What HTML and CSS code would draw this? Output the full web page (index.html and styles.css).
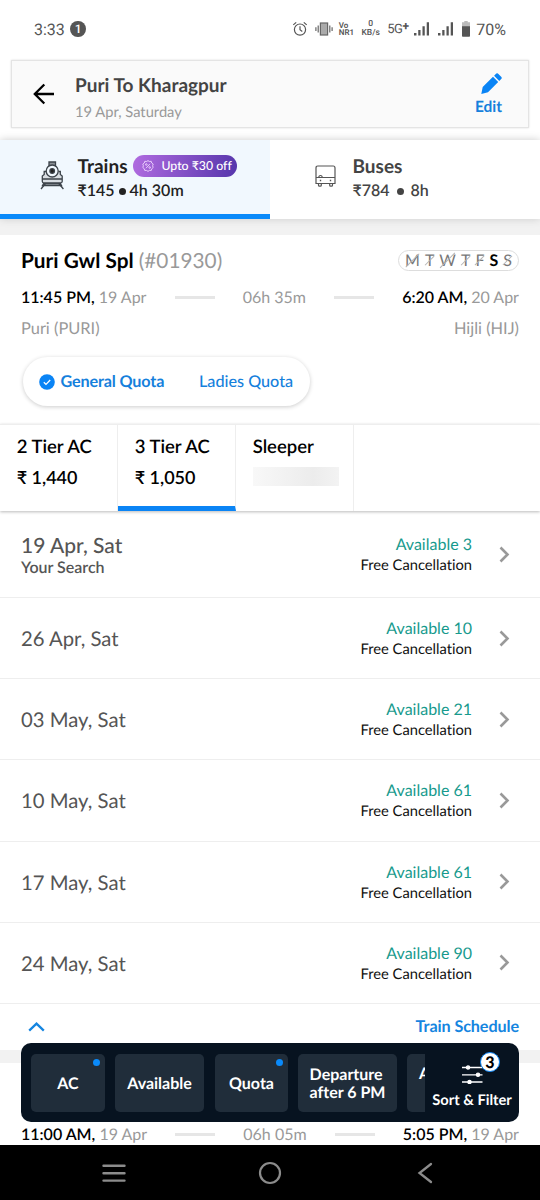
FILE: index.html
```html
<!DOCTYPE html>
<html lang="en">
<head>
<meta charset="utf-8">
<title>Puri To Kharagpur</title>
<link rel="stylesheet" href="styles.css">
</head>
<body>
<div class="phone">
  <div class="status">
    <span class="clock">3:33</span>
    <span class="notice">1</span>
    <svg class="alarm" width="16" height="16" viewBox="0 0 16 16" fill="none" stroke="#555" stroke-width="1.2"><circle cx="8" cy="8.6" r="5.6"/><path d="M8 5.3v3.5l2.3 1.6M1.3 3.9 4.2 1.4M14.7 3.9 11.8 1.4"/></svg>
    <svg class="vibrate" width="18" height="14" viewBox="0 0 18 14" fill="none" stroke="#666" stroke-width="1.2"><rect x="5.4" y="1" width="7.2" height="12" fill="#aaa"/><path d="M3.2 3.5v7M.9 5.3v3.6M14.8 3.5v7M17.1 5.3v3.6"/></svg>
    <span class="stack vonr"><b>Vo</b><b>NR1</b></span>
    <span class="stack speed"><b>0</b><b>KB/s</b></span>
    <span class="net">5G<sup>+</sup></span>
    <svg class="signal-a" width="15" height="14" viewBox="0 0 15.200 14" fill="#555"><path d="M0 11h2.5v2.5H0zM4.3 8h2.3v5.5H4.3zM8.6 4.2h2.3v9.3H8.6zM12.9.2h2.3v13.3h-2.3z"/></svg>
    <svg class="signal-b" width="15" height="14" viewBox="0 0 15.200 14" fill="#555"><path d="M0 11h2.5v2.5H0zM4.3 8h2.3v5.5H4.3zM8.6 4.2h2.3v9.3H8.6zM12.9.2h2.3v13.3h-2.3z"/></svg>
    <svg class="battery" width="8" height="16" viewBox="0 0 8 16"><path fill="#bbb" d="M2.3 0h3.4v1.3H8V6H0V1.300h2.300z"/><path fill="#555" d="M0 5.300h8V15a.8.8 0 0 1-.8.8H.8A.8.8 0 0 1 0 15z"/></svg>
    <span class="percent">70%</span>
  </div>

  <header class="route">
    <svg class="back" width="22" height="22" viewBox="0 0 22 22" fill="none" stroke="#000" stroke-width="2.3"><path d="M21 11H2M11.300 1.500 1.800 11l9.500 9.500"/></svg>
    <div class="route-text">
      <h1>Puri To Kharagpur</h1>
      <p>19 Apr, Saturday</p>
    </div>
    <div class="edit">
      <svg width="21" height="21" viewBox="0 0 21 21" fill="#0a84f5"><path d="M1.700 14 12 3.800l5.200 5.200L7 19.200.3 20.900zM13.100 2.700 15.300.6q.8-.7 1.600 0l3.500 3.500q.7.800 0 1.600l-2.100 2.200z"/></svg>
      <span>Edit</span>
    </div>
  </header>

  <nav class="modes">
    <div class="mode active">
      <svg class="train" width="24" height="29" viewBox="0 0 24 29" fill="none" stroke="#3c434a" stroke-width="1.300"><path fill="#8b9197" d="M9 1h6.500v4H9zM4 22h16l1.500 2.500h-19z"/><path fill="#d9dee3" d="M6 10.500H4.200v3L2.300 15v5.500q0 1.500 2 1.500h15.900q2 0 2-1.500V15l-1.900-1.500v-3H18.500M2.300 18h19.900"/><circle cx="12.200" cy="10" r="6" fill="#f1f8fe"/><circle cx="12.200" cy="10" r="2.300" fill="#222"/><path d="M5.500 22.500 1 28M18.800 22.500l4.600 5.500"/></svg>
      <div class="mode-text">
        <div class="mode-name">Trains
          <span class="offer"><svg width="12" height="12" viewBox="0 0 12 12" fill="none" stroke="#f0d8ff" stroke-width=".9"><path d="M6 .6 7.400 1.500 9.200 1.300 9.700 3 11.200 4.100 10.600 5.800 11.200 7.500 9.800 8.700 9.300 10.400 7.500 10.400 6 11.400 4.500 10.400 2.700 10.400 2.200 8.700.8 7.500 1.400 5.800.8 4.100 2.300 3 2.800 1.300 4.600 1.500zM4 8.200l4-4.400"/><circle cx="4.300" cy="4.500" r=".8"/><circle cx="7.700" cy="7.500" r=".8"/></svg>Upto ₹30 off</span>
        </div>
        <div class="mode-info">₹145 <i class="dot"></i> 4h 30m</div>
      </div>
    </div>
    <div class="mode">
      <svg class="bus" width="21" height="23" viewBox="0 0 21 23" fill="none" stroke="#555" stroke-width="1.200"><path d="M2.800 1h15.400q1.800 0 1.800 2v15.500H1V3q0-2 1.800-2zM1 12.500h19M3.800 12.500q0-2 1.700-2t1.700 2M3.500 18.500v1.700q0 1 1 1h.8q1 0 1-1v-1.700M14.700 18.500v1.700q0 1 1 1h.8q1 0 1-1v-1.700"/><path d="M4.800 15.500h1.400M14.800 15.500h1.400" stroke-width="1.500"/></svg>
      <div class="mode-text">
        <div class="mode-name">Buses</div>
        <div class="mode-info wide">₹784 <i class="dot"></i> 8h</div>
      </div>
    </div>
  </nav>

  <main class="results">
    <section class="trip">
      <div class="trip-head">
        <h2>Puri Gwl Spl <span>(#01930)</span></h2>
        <div class="days"><s>M</s><s>T</s><s>W</s><s>T</s><s>F</s><b>S</b><s>S</s></div>
      </div>
      <div class="times">
        <span class="depart"><b>11:45 PM,</b> 19 Apr</span><i class="dash"></i>
        <span class="span">06h 35m</span><i class="dash"></i>
        <span class="arrive"><b>6:20 AM,</b> 20 Apr</span>
      </div>
      <div class="stations"><span>Puri (PURI)</span><span>Hijli (HIJ)</span></div>
      <div class="quota">
        <svg width="16" height="16" viewBox="0 0 16 16"><circle cx="8" cy="8" r="7.800" fill="#0a84f5"/><path d="m4.800 8.200 2.200 2.200 4.200-4.400" fill="none" stroke="#fff" stroke-width="1.300"/></svg>
        <span class="general">General Quota</span>
        <span class="ladies">Ladies Quota</span>
      </div>
    </section>

    <div class="classes">
      <div class="class"><span class="class-name">2 Tier AC</span><span class="fare">₹ 1,440</span></div>
      <div class="class chosen"><span class="class-name">3 Tier AC</span><span class="fare">₹ 1,050</span></div>
      <div class="class"><span class="class-name">Sleeper</span><span class="skeleton"></span></div>
    </div>

    <div class="dates">
      <div class="row first"><div class="date"><span>19 Apr, Sat</span><small>Your Search</small></div><div class="seats"><span>Available 3</span><small>Free Cancellation</small></div><svg class="go" viewBox="0 0 11 17"><path d="m1.500 1.500 7 7-7 7"/></svg></div>
      <div class="row"><div class="date"><span>26 Apr, Sat</span></div><div class="seats"><span>Available 10</span><small>Free Cancellation</small></div><svg class="go" viewBox="0 0 11 17"><path d="m1.500 1.500 7 7-7 7"/></svg></div>
      <div class="row"><div class="date"><span>03 May, Sat</span></div><div class="seats"><span>Available 21</span><small>Free Cancellation</small></div><svg class="go" viewBox="0 0 11 17"><path d="m1.500 1.500 7 7-7 7"/></svg></div>
      <div class="row"><div class="date"><span>10 May, Sat</span></div><div class="seats"><span>Available 61</span><small>Free Cancellation</small></div><svg class="go" viewBox="0 0 11 17"><path d="m1.500 1.500 7 7-7 7"/></svg></div>
      <div class="row"><div class="date"><span>17 May, Sat</span></div><div class="seats"><span>Available 61</span><small>Free Cancellation</small></div><svg class="go" viewBox="0 0 11 17"><path d="m1.500 1.500 7 7-7 7"/></svg></div>
      <div class="row"><div class="date"><span>24 May, Sat</span></div><div class="seats"><span>Available 90</span><small>Free Cancellation</small></div><svg class="go" viewBox="0 0 11 17"><path d="m1.500 1.500 7 7-7 7"/></svg></div>
    </div>

    <div class="schedule">
      <svg width="17" height="10" viewBox="0 0 17 10" fill="none" stroke="#1585e0" stroke-width="2.300"><path d="m1.200 8.700 7.300-7 7.300 7"/></svg>
      <span>Train Schedule</span>
    </div>

    <section class="next-trip">
      <div class="times">
        <span class="depart"><b>11:00 AM,</b> 19 Apr</span><i class="dash"></i>
        <span class="span">06h 05m</span><i class="dash"></i>
        <span class="arrive"><b>5:05 PM,</b> 19 Apr</span>
      </div>
    </section>
  </main>

  <aside class="filters">
    <div class="chips">
      <span class="chip ac marked">AC</span>
      <span class="chip avail">Available</span>
      <span class="chip quota-chip marked">Quota</span>
      <span class="chip departure">Departure<br>after 6 PM</span>
      <span class="chip cut">A</span>
    </div>
    <div class="sort">
      <svg width="21" height="19" viewBox="0 0 21 19" stroke="#fff" stroke-width="1.300" fill="#fff"><path d="M0 2.500h20.500M0 9.800h20.500M0 17h20.500"/><circle cx="6" cy="2.500" r="1.600"/><circle cx="16" cy="9.800" r="1.600"/><circle cx="7.500" cy="17" r="1.600"/></svg>
      <span>Sort &amp; Filter</span>
      <b class="count">3</b>
    </div>
  </aside>

  <footer class="system">
    <svg width="24" height="20" viewBox="0 0 24 20" stroke="#8c8c8c" stroke-width="2.400" stroke-linecap="round"><path d="M1.500 2.700h21M1.500 10.200h21M1.500 17.600h21"/></svg>
    <svg width="24" height="24" viewBox="0 0 24 24" fill="none" stroke="#8c8c8c" stroke-width="2.200"><circle cx="12" cy="12" r="10"/></svg>
    <svg width="16" height="22" viewBox="0 0 16 22" fill="none" stroke="#8c8c8c" stroke-width="2.300" stroke-linecap="round"><path d="M14 2 2.500 11 14 20"/></svg>
  </footer>
</div>
</body>
</html>
```
FILE: styles.css
```css
* { box-sizing: border-box; }
body { margin: 0; background: #fff; font-family: Lato, sans-serif; color: #000; text-rendering: geometricPrecision; font-variant-ligatures: none; }
h1, h2, p { margin: 0; }
svg { display: block; flex: none; }
.phone { position: relative; width: 540px; height: 1200px; overflow: hidden; display: flex; flex-direction: column; background: #fff; white-space: nowrap; }

.status { height: 60px; flex: none; display: flex; align-items: center; padding: 0 34px 2px; color: #555; font-family: Roboto, sans-serif; font-size: 16px; }
.clock { width: 37px; }
.notice { width: 16px; height: 16px; margin-left: 1px; border-radius: 50%; background: #555; color: #fff; font-size: 12px; line-height: 16px; text-align: center; font-weight: 500; }
.alarm { margin-left: 205px; }
.vibrate { margin-left: 7px; }
.stack { display: flex; flex-direction: column; text-align: center; font-size: 8px; line-height: 7px; }
.stack b { font-weight: 600; }
.vonr { width: 16px; margin-left: 6px; text-align: left; font-size: 8px; }
.speed { width: 20px; margin-left: 7px; font-size: 8.500px; }
.speed b { font-weight: 500; line-height: 9px; }
.net { width: 21px; margin-left: 7px; font-size: 13px; letter-spacing: -.5px; }
.net sup { font-size: 12px; line-height: 0; vertical-align: 3px; font-weight: 700; }
.alarm, .vibrate, .stack, .net { position: relative; left: 1px; }
.signal-a { margin-left: 7px; }
.signal-b { margin-left: 9px; }
.battery { margin-left: 9px; }
.percent { margin-left: 6px; }

.route { flex: none; height: 68px; margin: 0 11px 12px; border: 1px solid #e4e4e4; background: #fafafa; box-shadow: 0 0 2px #ddd; display: flex; align-items: center; }
.back { margin-left: 21px; }
.route-text { margin-left: 20px; flex: 1; padding-top: 10px; }
.route h1 { font-size: 19px; line-height: 26px; font-weight: 700; color: #444; }
.route p { font-size: 14.700px; line-height: 26px; color: #999; }
.edit { width: 53px; display: flex; flex-direction: column; align-items: center; gap: 3px; margin: 2px 13px 0 0; color: #1580dc; font-size: 15.500px; font-weight: 700; line-height: 20px; }
.edit svg { margin-left: 6px; }

.modes { position: relative; z-index: 1; flex: none; height: 79px; display: flex; box-shadow: 0 0 8px #ccc; background: #fff; }
.mode { width: 270px; padding-left: 45px; display: flex; align-items: flex-start; color: #444; }
.mode.active { padding-left: 40px; background: #f1f8fe; border-bottom: 5px solid #0a8afa; color: #222; }
.train { margin-top: 21px; }
.bus { margin-top: 25px; }
.mode-text { margin-left: 13.500px; padding-top: 15px; }
.mode:not(.active) .mode-text { margin-left: 16.500px; }
.mode-name { display: flex; align-items: center; font-size: 19px; line-height: 24px; font-weight: 700; }
.mode-info { font-size: 16px; line-height: 24px; font-weight: 600; }
.dot { display: inline-block; width: 7px; height: 7px; border-radius: 50%; background: currentColor; vertical-align: 1px; }
.wide .dot { margin: 0 3px; }
.offer { display: flex; align-items: center; gap: 7px; width: 104px; height: 22px; margin: -2px 0 0 6px; padding-left: 9px; border-radius: 11px; background: linear-gradient(100deg, #b06be0, #5636ac); color: #fff; font-size: 12.300px; font-weight: 500; }

.results { flex: 1; min-height: 0; overflow: hidden; border-top: 16px solid #f2f2f2; }
.trip { height: 189px; padding: 14px 21px 0; }
.trip-head { display: flex; justify-content: space-between; align-items: center; height: 24px; }
.trip h2 { font-size: 20.800px; line-height: 26px; font-weight: 700; }
.trip h2 span { font-weight: 400; color: #999; }
.days { width: 121px; height: 21px; margin-top: -2px; padding: 0 6px; border: 1px solid #ddd; border-radius: 11px; display: flex; justify-content: space-between; align-items: center; font-size: 16px; color: #777; }
.days s { position: relative; text-decoration: none; }
.days s::after { content: ""; position: absolute; left: -2px; right: -2px; top: 50%; border-top: 1px solid #b4b4b4; transform: rotate(-45deg); }
.days b { color: #000; }
.times { display: flex; align-items: center; justify-content: space-between; height: 24px; font-size: 16px; color: #999; }
.trip .times { margin-top: 12px; }
.times b { color: #000; font-weight: 600; }
.dash { width: 40px; height: 3px; background: #e6e6e6; }
.stations { display: flex; justify-content: space-between; margin-top: 8px; font-size: 16.400px; line-height: 24px; color: #999; }
.quota { display: flex; align-items: center; width: 287px; height: 49px; margin: 16px 2px 0; padding-left: 16px; border-radius: 25px; box-shadow: 0 1px 4px #ccc; font-size: 16.200px; color: #1580dc; }
.general { width: 138.500px; margin-left: 5.500px; font-weight: 700; letter-spacing: -.15px; }
.ladies { font-weight: 500; }

.classes { position: relative; display: flex; height: 87px; border-top: 1px solid #eee; box-shadow: 0 1px 3px #bbb; background: #fff; }
.class { width: 118px; padding: 9px 0 0 16.700px; border-right: 1px solid #eee; display: flex; flex-direction: column; font-weight: 600; }
.chosen { border-bottom: 5px solid #0a84f5; }
.class-name { font-size: 18.500px; line-height: 24px; }
.fare { margin-top: 7px; font-size: 18px; line-height: 24px; }
.skeleton { width: 86px; height: 19px; margin-top: 9px; background: linear-gradient(90deg, #f8f8f8, #ececec 70%, #f3f3f3); }

.row { display: flex; align-items: center; height: 81.200px; padding: 0 30px 0 21px; border-bottom: 1px solid #eee; }
.row.first { height: 87px; }
.date { flex: 1; display: flex; flex-direction: column; padding-top: 2px; font-size: 20.300px; line-height: 24px; color: #555; }
.date small { font-size: 16px; line-height: 19px; font-weight: 600; }
.first .date { font-weight: 500; font-size: 21px; }
.seats { display: flex; flex-direction: column; padding-top: 2px; text-align: right; font-size: 16px; line-height: 21px; color: #179a8d; }
.seats small { color: #111; font-size: 14.700px; }
.go { width: 11px; height: 17px; margin-left: 27px; fill: none; stroke: #999; stroke-width: 2.600; }

.schedule { display: flex; justify-content: space-between; align-items: center; height: 46px; padding: 0 21px 0 28px; font-size: 16.200px; letter-spacing: -.1px; font-weight: 700; color: #1585e0; }
.next-trip { border-top: 13px solid #f2f2f2; padding: 60px 21px 0; }

.filters { position: absolute; left: 21px; top: 1043px; z-index: 2; width: 498px; height: 79px; border-radius: 10px; background: #071320; color: #fff; display: flex; font-weight: 700; }
.chips { width: 404px; padding: 11px 0 0 10px; display: flex; gap: 10px; overflow: hidden; }
.chip { flex: none; position: relative; height: 58px; padding-top: 2px; border-radius: 5px; background: #202d3a; display: flex; align-items: center; justify-content: center; font-size: 16px; line-height: 18.500px; }
.ac { width: 74px; }
.avail { width: 89px; margin-right: 1px; }
.quota-chip { width: 73px; }
.departure { width: 99px; }
.cut { width: 80px; align-items: flex-start; justify-content: flex-start; padding: 11px 0 0 12px; }
.marked::after { content: ""; position: absolute; right: 5px; top: 5px; width: 7px; height: 7px; border-radius: 50%; background: #0a8afa; }
.sort { position: relative; flex: 1; display: flex; flex-direction: column; align-items: center; padding: 22px 0 0; gap: 7px; font-size: 14.700px; line-height: 18px; }
.count { position: absolute; left: 55px; top: 9px; width: 20px; height: 20px; border: 1.500px solid #0a84f5; border-radius: 50%; background: #fff; color: #000; font-size: 16px; text-align: center; line-height: 19px; }

.system { flex: none; height: 55px; background: #000; display: flex; justify-content: space-between; align-items: center; padding: 0 107px 0 102px; }
.system svg:nth-child(2) { margin-right: 4px; }
```
